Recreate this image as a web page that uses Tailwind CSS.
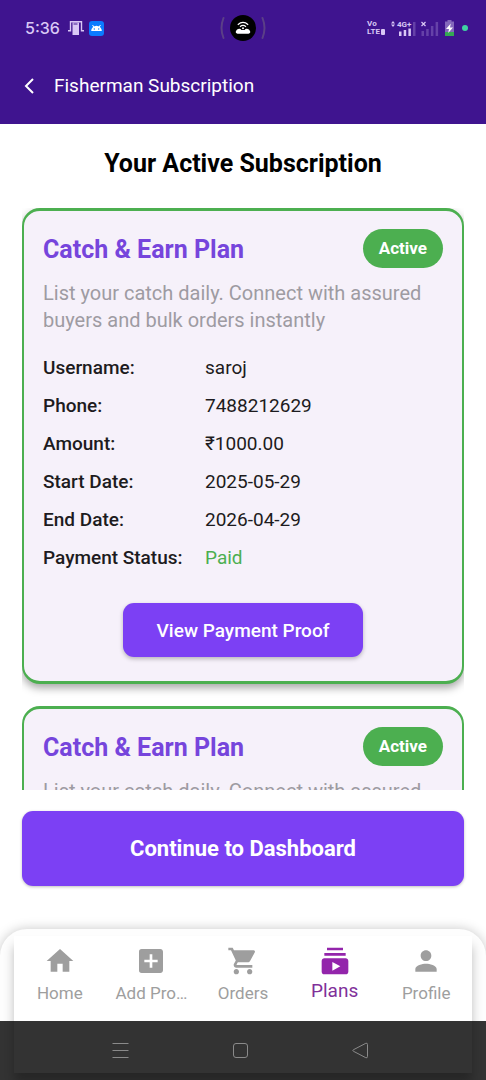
<!DOCTYPE html>
<html lang="en">
<head>
<meta charset="utf-8">
<meta name="viewport" content="width=device-width, initial-scale=1">
<title>Fisherman Subscription</title>
<script src="https://cdn.jsdelivr.net/npm/@tailwindcss/browser@4"></script>
</head>
<body class="flex h-screen flex-col bg-white font-[Roboto,sans-serif] text-[#1d1b20]">

<header class="shrink-0 bg-[#3f148f] text-white">
  <!-- Status bar -->
  <div class="grid h-14 grid-cols-[1fr_auto_1fr] items-center px-[18px]">
    <div class="flex items-center pl-[7px] text-[#d9c8f5]">
      <span class="font-[Inter,sans-serif] text-[16px] leading-5 font-medium">5:36</span>
      <svg class="ml-2 h-4 w-4" viewBox="0 0 16 16" aria-hidden="true">
        <path d="M2.500 10.500V1.700h11v8.800M0 10.700h3.200M12.800 10.700H16" fill="none" stroke="currentColor" stroke-width="1.400"/>
        <rect x="4.500" y="2.500" width="6.500" height="12.500" fill="currentColor"/>
        <path d="M5.500 4h4" stroke="#3f148f" stroke-width="1"/>
      </svg>
      <svg class="ml-[5px] h-[15px] w-[15px]" viewBox="0 0 15 15" aria-hidden="true">
        <rect width="15" height="15" rx="3" fill="#0b7bff"/>
        <path d="M2.200 10a5.300 5.300 0 0 1 10.600 0z" fill="#fff"/>
        <path d="M4.700 6 3.600 4M10.300 6l1.100-2" stroke="#fff" stroke-width="1"/>
        <circle cx="5.300" cy="8" r=".7" fill="#0b7bff"/><circle cx="9.700" cy="8" r=".7" fill="#0b7bff"/>
      </svg>
    </div>
    <svg class="h-[28px] w-[46px]" viewBox="0 0 46 28" aria-hidden="true">
      <path d="M3.500 4q-4 10 0 20M42.500 4q4 10 0 20" fill="none" stroke="#5b3f87" stroke-width="2" stroke-linecap="round"/>
      <circle cx="23" cy="14" r="13" fill="#000"/>
      <path d="M17.800 10.700q5.200-4.600 10.400 0M20 12.700q3-2.600 6 0" fill="none" stroke="#fff" stroke-width="1.200"/>
      <circle cx="23" cy="14.300" r="1" fill="#fff"/>
      <path d="M17.500 19.700a2 2 0 0 1-1.500-2.700q.6-2 3-2.300 1.600-.2 2.400 1.300h3.200q.8-1.500 2.400-1.300 2.400.3 3 2.300a2 2 0 0 1-1.500 2.700z" fill="#fff"/>
    </svg>
    <div class="flex items-center justify-end text-[#d9c8f5]">
      <div class="text-[8px] leading-[8px] font-bold">
        <div>Vo</div>
        <div class="flex items-center">LTE<span class="ml-px h-[6px] w-1 rounded-[1px] bg-[#d9c8f5]"></span></div>
      </div>
      <div class="ml-[6px] flex flex-col">
        <div class="flex h-[7px] items-center text-[8px] leading-[7px] font-bold">
          <svg class="mr-[2px] h-[6px] w-1" viewBox="0 0 4 6" aria-hidden="true"><path d="M0 2.500 2 0l2 2.500zM0 3.500h4L2 6z" fill="currentColor"/></svg>4G+
        </div>
        <svg class="-mt-[6px] ml-2 h-[14px] w-[17px]" viewBox="0 0 17 14" aria-hidden="true">
          <path d="M0 9.500h2.500V14H0zM4.700 8h2.500v6H4.700zM9.400 6.500h2.500V14H9.400z" fill="currentColor"/>
          <path d="M14 0h2.500v14H14z" fill="currentColor" opacity=".25"/>
        </svg>
      </div>
      <svg class="ml-[5px] h-[15px] w-[18px]" viewBox="0 0 18 15" aria-hidden="true">
        <path d="M.5 1l4 4M4.500 1l-4 4" stroke="currentColor" stroke-width="1.200"/>
        <path d="M.5 10H3v5H.5zM5.200 8h2.500v7H5.200zM9.900 5h2.500v10H9.900zM14.600 1h2.500v14h-2.500z" fill="currentColor" opacity=".25"/>
      </svg>
      <svg class="ml-[6px] h-[16px] w-[9px]" viewBox="0 0 9 16" aria-hidden="true">
        <path d="M2.500 0h4v1.500H9V16H0V1.500h2.500z" fill="#8468bb"/>
        <path d="M0 12h9v4H0z" fill="#35a853"/>
        <path d="M5.800 3.500 1 9h3l-.8 4L8 7.500H5z" fill="#fff"/>
      </svg>
      <span class="ml-2 h-[6px] w-[6px] rounded-full bg-[#40d3a2]"></span>
    </div>
  </div>
  <!-- App bar -->
  <div class="flex h-[68px] items-start pt-4 pl-[21px]">
    <button type="button" aria-label="Back" class="flex h-[27px] w-4 items-center justify-center">
      <svg class="h-4 w-[10px]" viewBox="0 0 10 16" fill="none" stroke="currentColor" stroke-width="2" aria-hidden="true"><path d="M9 1 2 8l7 7"/></svg>
    </button>
    <h1 class="ml-[17px] text-[19px] leading-[27px]">Fisherman Subscription</h1>
  </div>
</header>

<main class="flex min-h-0 flex-1 flex-col px-[22px]">
  <h2 class="shrink-0 pt-6 pb-7 text-center text-[25px] leading-8 font-bold text-black">Your Active Subscription</h2>

  <div class="flex min-h-0 flex-1 flex-col gap-[22px] overflow-hidden">
    <article class="shrink-0 rounded-[18px] border-x-2 border-y-[3px] border-[#4caf50] bg-[#f6f1fa] px-[19px] pt-[18px] pb-6 shadow-[0_4px_8px_rgba(0,0,0,0.35)]">
      <div class="flex items-center justify-between">
        <h3 class="pt-[2px] text-[25px] leading-8 font-bold text-[#7645dc]">Catch &amp; Earn Plan</h3>
        <span class="rounded-full bg-[#4caf50] px-4 py-2 text-[17px] leading-[23px] font-bold text-white">Active</span>
      </div>
      <p class="mt-3 text-[20px] leading-[27px] text-[#9e9ba2]">List your catch daily. Connect with assured buyers and bulk orders instantly</p>
      <dl class="mt-5 grid grid-cols-[162px_1fr] gap-y-[11px] text-[19px] leading-[27px]">
        <dt class="font-medium">Username:</dt><dd>saroj</dd>
        <dt class="font-medium">Phone:</dt><dd>7488212629</dd>
        <dt class="font-medium">Amount:</dt><dd>₹1000.00</dd>
        <dt class="font-medium">Start Date:</dt><dd>2025-05-29</dd>
        <dt class="font-medium">End Date:</dt><dd>2026-04-29</dd>
        <dt class="font-medium">Payment Status:</dt><dd class="text-[#4caf50]">Paid</dd>
      </dl>
      <div class="mt-8 flex justify-center">
        <button type="button" class="h-[54px] rounded-[11px] bg-[#7c40f4] px-[34px] text-[19px] leading-[27px] font-medium text-white shadow-[0_2px_4px_rgba(0,0,0,0.25)]">View Payment Proof</button>
      </div>
    </article>

    <article class="shrink-0 rounded-[18px] border-x-2 border-y-[3px] border-[#4caf50] bg-[#f6f1fa] px-[19px] pt-[18px] pb-6">
      <div class="flex items-center justify-between">
        <h3 class="pt-[2px] text-[25px] leading-8 font-bold text-[#7645dc]">Catch &amp; Earn Plan</h3>
        <span class="rounded-full bg-[#4caf50] px-4 py-2 text-[17px] leading-[23px] font-bold text-white">Active</span>
      </div>
      <p class="mt-3 text-[20px] leading-[27px] text-[#9e9ba2]">List your catch daily. Connect with assured buyers and bulk orders instantly</p>
    </article>
  </div>

  <button type="button" class="mt-[21px] mb-[43px] h-[75px] w-full shrink-0 rounded-[11px] bg-[#7c40f4] text-[22px] leading-8 font-bold text-white shadow-[0_1px_3px_rgba(0,0,0,0.25)]">Continue to Dashboard</button>
</main>

<footer class="relative shrink-0 rounded-t-[27px] bg-[#fdfdfd] px-[14px] pt-[7px] pb-[7px] shadow-[0_0_12px_rgba(0,0,0,0.22)]">
  <nav class="h-[137px] bg-white shadow-[0_10px_10px_rgba(0,0,0,0.25)]" aria-label="Main">
    <ul class="grid grid-cols-5 pt-[9px] text-center text-[17px] leading-[22px] text-[#9e9e9e]">
      <li><a href="#home" class="flex flex-col items-center">
        <svg class="h-8 w-8" viewBox="0 0 24 24" fill="currentColor" aria-hidden="true"><path d="M10 20v-6h4v6h5v-8h3L12 3 2 12h3v8z"/></svg>
        <span class="mt-[5px]">Home</span></a></li>
      <li><a href="#add" class="flex flex-col items-center">
        <svg class="h-8 w-8" viewBox="0 0 24 24" fill="currentColor" aria-hidden="true"><path d="M19 3H5a2 2 0 0 0-2 2v14a2 2 0 0 0 2 2h14c1.100 0 2-.9 2-2V5c0-1.100-.9-2-2-2zm-2 10h-4v4h-2v-4H7v-2h4V7h2v4h4z"/></svg>
        <span class="mt-[5px]">Add Pro…</span></a></li>
      <li><a href="#orders" class="flex flex-col items-center">
        <svg class="h-8 w-8" viewBox="0 0 24 24" fill="currentColor" aria-hidden="true"><path d="M7 18c-1.100 0-1.990.9-1.990 2S5.900 22 7 22s2-.9 2-2-.9-2-2-2zM1 2v2h2l3.600 7.590-1.350 2.450c-.16.280-.25.610-.25.960 0 1.100.9 2 2 2h12v-2H7.420c-.14 0-.25-.11-.25-.25l.03-.12.9-1.630h7.450c.75 0 1.410-.41 1.750-1.030l3.580-6.490A1 1 0 0 0 20 4H5.210l-.94-2zm16 16c-1.100 0-1.990.9-1.990 2s.89 2 1.990 2 2-.9 2-2-.9-2-2-2z"/></svg>
        <span class="mt-[5px]">Orders</span></a></li>
      <li><a href="#plans" aria-current="page" class="flex flex-col items-center text-[#9325ab]">
        <svg class="h-8 w-8" viewBox="0 0 24 24" fill="currentColor" aria-hidden="true"><path d="M20 8H4V6h16zm-2-6H6v2h12zm4 10v8c0 1.100-.9 2-2 2H4c-1.100 0-2-.9-2-2v-8c0-1.100.9-2 2-2h16c1.100 0 2 .9 2 2zm-6 4-6-3.270v6.530z"/></svg>
        <span class="mt-[3px] text-[19px] text-[#80309a]">Plans</span></a></li>
      <li><a href="#profile" class="flex flex-col items-center">
        <svg class="h-8 w-8" viewBox="0 0 24 24" fill="currentColor" aria-hidden="true"><path d="M12 12c2.210 0 4-1.790 4-4s-1.790-4-4-4-4 1.790-4 4 1.790 4 4 4zm0 2c-2.670 0-8 1.340-8 4v2h16v-2c0-2.660-5.330-4-8-4z"/></svg>
        <span class="mt-[5px]">Profile</span></a></li>
    </ul>
  </nav>
  <!-- Translucent system navigation bar over the bottom of the footer -->
  <div class="absolute inset-x-0 bottom-0 flex h-[59px] items-center justify-center gap-[103px] bg-black/80 pr-[5px] text-[#8a8a8a]">
    <button type="button" aria-label="Recent apps"><svg class="h-[17px] w-[17px]" viewBox="0 0 17 17" fill="none" stroke="currentColor" aria-hidden="true"><path d="M.5 1.500h16M.5 8.500h16M.5 15.500h16"/></svg></button>
    <button type="button" aria-label="Home"><svg class="h-[17px] w-[17px]" viewBox="0 0 17 17" fill="none" stroke="currentColor" aria-hidden="true"><rect x="1.500" y="1.500" width="14" height="14" rx="2.500"/></svg></button>
    <button type="button" aria-label="Back"><svg class="h-[17px] w-[17px]" viewBox="0 0 17 17" fill="none" stroke="currentColor" stroke-linejoin="round" aria-hidden="true"><path d="M1.300 7.800 13.800 1.300q1.700-.6 1.700 1.200v12q0 1.800-1.700 1.200L1.300 9.200q-1-.7 0-1.400z"/></svg></button>
  </div>
</footer>
</body>
</html>
